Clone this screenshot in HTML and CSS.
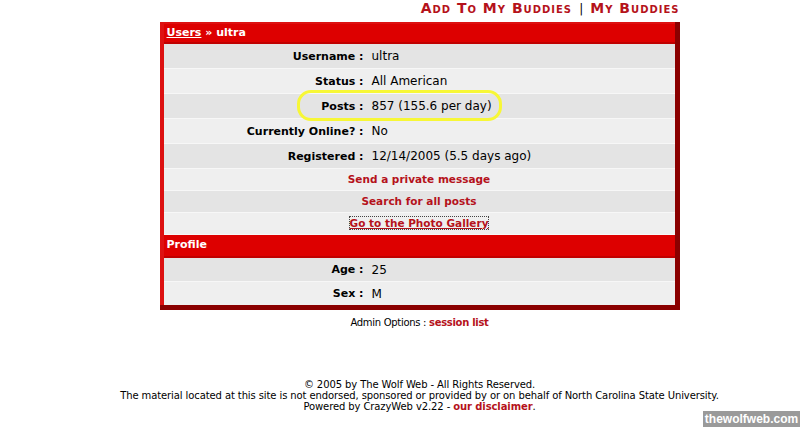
FILE: index.html
```html
<!DOCTYPE html>
<html lang="en">
<head>
    <meta charset="UTF-8">
    <title>The Wolf Web - ultra</title>
    <link rel="stylesheet" href="styles.css">
</head>
<body>

<div class="page">
    <div class="buddy-links">
        <a href="#">Add To My Buddies</a>
        <span class="sep">|</span>
        <a href="#">My Buddies</a>
    </div>

    <table class="user-box">
        <tr class="head">
            <td colspan="2"><a href="#">Users</a> &raquo; ultra</td>
        </tr>
        <tr class="dark">
            <td class="label">Username :</td>
            <td class="value">ultra</td>
        </tr>
        <tr class="light">
            <td class="label">Status :</td>
            <td class="value">All American</td>
        </tr>
        <tr class="dark">
            <td class="label"><span class="mark-wrap">Posts :<span class="mark"></span></span></td>
            <td class="value">857 (155.6 per day)</td>
        </tr>
        <tr class="light">
            <td class="label">Currently Online? :</td>
            <td class="value">No</td>
        </tr>
        <tr class="dark">
            <td class="label">Registered :</td>
            <td class="value">12/14/2005 (5.5 days ago)</td>
        </tr>
        <tr class="light link-row">
            <td colspan="2"><a href="#">Send a private message</a></td>
        </tr>
        <tr class="dark link-row">
            <td colspan="2"><a href="#">Search for all posts</a></td>
        </tr>
        <tr class="light link-row">
            <td colspan="2"><a href="#" class="focused">Go to the Photo Gallery</a></td>
        </tr>
        <tr class="head profile">
            <td colspan="2">Profile</td>
        </tr>
        <tr class="dark short">
            <td class="label">Age :</td>
            <td class="value">25</td>
        </tr>
        <tr class="light short last">
            <td class="label">Sex :</td>
            <td class="value">M</td>
        </tr>
    </table>

    <div class="admin">Admin Options : <a href="#">session list</a></div>

    <div class="footer">
        &copy; 2005 by The Wolf Web - All Rights Reserved.<br>
        The material located at this site is not endorsed, sponsored or provided by or on behalf of North Carolina State University.<br>
        Powered by CrazyWeb v2.22 - <a href="#">our disclaimer</a>.
    </div>
</div>

<div class="watermark">thewolfweb.com</div>

</body>
</html>
```

FILE: styles.css
```css
body {
    margin: 0;
    background-color: #fff;
    font-family: "DejaVu Sans", Verdana, sans-serif;
    color: #000;
}

.page {
    padding-left: 39px;
    text-align: center;
}

.buddy-links {
    width: 520px;
    margin: 0 auto;
    text-align: right;
    height: 20px;
    line-height: 16px;
}

.buddy-links a {
    color: #b5121b;
    text-decoration: none;
    font-weight: bold;
    font-variant: small-caps;
    font-size: 14px;
    letter-spacing: 1px;
}

.buddy-links .sep {
    font-size: 12px;
    color: #000;
    margin: 0 2px;
}

.user-box {
    width: 520px;
    margin: 2px auto 0;
    border-collapse: collapse;
    border-style: solid;
    border-width: 2px 5px 5px 4px;
    border-color: #dd1111 #8a0000 #8a0000 #dd1111;
    font-size: 11px;
}

.user-box td {
    padding: 0;
}

.user-box .head td {
    background-color: #dd0000;
    color: #fff;
    font-weight: bold;
    text-align: left;
    padding-left: 3px;
    padding-bottom: 1px;
    height: 17px;
    border-bottom: 2px solid #c00000;
}

.user-box .profile td {
    height: 19px;
    padding-bottom: 2px;
}

.user-box .head a {
    color: #fff;
}

.user-box .dark td {
    background-color: #e4e4e4;
}

.user-box .light td {
    background-color: #efefef;
}

.user-box tr.dark td,
.user-box tr.light td {
    height: 24px;
    border-bottom: 1px solid #f7f7f7;
}

.user-box tr.link-row td {
    height: 21px;
    text-align: center;
}

.user-box tr.short td {
    height: 23px;
}

.user-box tr.last td {
    border-bottom: none;
}

.user-box .label {
    width: 200px;
    text-align: right;
    font-weight: bold;
    padding-right: 8px;
}

.user-box .value {
    text-align: left;
    font-size: 12px;
}

.link-row a {
    color: #b5121b;
    font-weight: bold;
    font-size: 10.5px;
    text-decoration: none;
}

.link-row a.focused {
    text-decoration: underline;
    outline: 1px dotted #444;
}

.mark-wrap {
    position: relative;
}

.mark {
    position: absolute;
    left: -24px;
    top: -10px;
    width: 199px;
    height: 25px;
    border: 3px solid #f7f736;
    border-radius: 14px;
}

.admin {
    font-size: 10px;
    letter-spacing: -0.3px;
    margin-top: 7px;
}

.admin a,
.footer a {
    color: #b5121b;
    font-weight: bold;
    text-decoration: none;
}

.footer {
    font-size: 10px;
    line-height: 11px;
    letter-spacing: -0.1px;
    margin-top: 51px;
}

.watermark {
    position: absolute;
    right: 0;
    top: 411px;
    width: 97px;
    height: 16px;
    background-color: #9a9a9a;
    color: #fff;
    font-family: "Liberation Sans", Arial, sans-serif;
    font-weight: bold;
    font-size: 12px;
    line-height: 16px;
    text-align: center;
}
```
